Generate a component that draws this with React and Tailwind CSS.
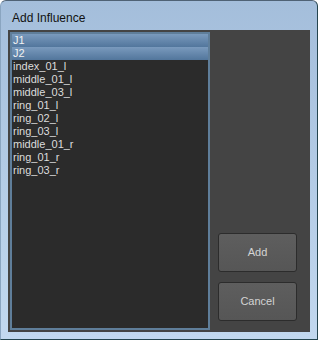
import React from "react";

const items = [
  "J1",
  "J2",
  "index_01_l",
  "middle_01_l",
  "middle_03_l",
  "ring_01_l",
  "ring_02_l",
  "ring_03_l",
  "middle_01_r",
  "ring_01_r",
  "ring_03_r",
];

const selected = ["J1", "J2"];

function App() {
  return (
    <div
      className="w-[318px] h-[340px] flex flex-col rounded-t-[6px] border border-t-[#4f6275] border-l-[#8aa5c0] border-r-[#25454f] border-b-[#25454f] bg-gradient-to-b from-[#a4bedb] to-[#c2d8ef]"
      style={{ fontFamily: '"Liberation Sans", Arial, sans-serif' }}
    >
      {/* Title bar */}
      <div className="h-[29px] pt-[10px] pl-[11px] text-[12px] leading-[14px] text-[#111]">
        Add Influence
      </div>

      {/* Client area */}
      <div className="mx-[7px] mb-[7px] h-[302px] bg-[#444444] p-[2px] flex">
        {/* List */}
        <div className="w-[200px] h-[298px] border-2 border-[#5f7e9a] bg-[#2b2b2b] overflow-hidden">
          {items.map((name) => {
            const isSel = selected.includes(name);
            return (
              <div
                key={name}
                className={`h-[13px] leading-[13px] pl-[1px] text-[11px] text-[#dcdcdc] ${
                  isSel ? "bg-gradient-to-b from-[#7a9abd] to-[#52769c] text-[#f2f2f2]" : ""
                }`}
              >
                {name}
              </div>
            );
          })}
        </div>

        {/* Buttons */}
        <div className="ml-[8px] w-[79px] flex flex-col justify-end gap-[10px] pb-[9px]">
          <button className="h-[39px] rounded-[3px] border border-[#2c2c2c] bg-gradient-to-b from-[#5e5e5e] to-[#565656] text-[11px] text-[#d4d4d4]">
            Add
          </button>
          <button className="h-[39px] rounded-[3px] border border-[#2c2c2c] bg-gradient-to-b from-[#5e5e5e] to-[#565656] text-[11px] text-[#d4d4d4]">
            Cancel
          </button>
        </div>
      </div>
    </div>
  );
}

export default App;
